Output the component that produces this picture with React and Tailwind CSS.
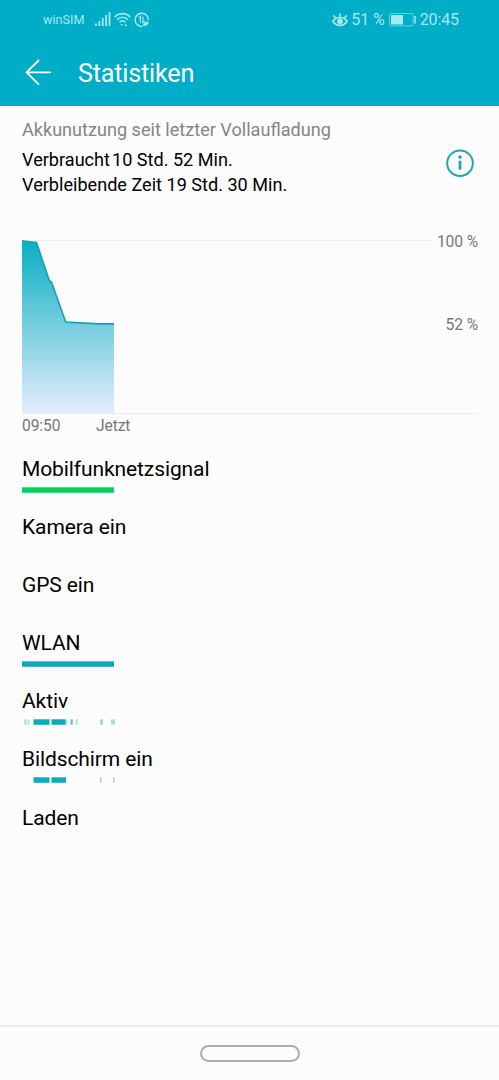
import React from 'react';

const usageRows = [
    { name: 'Mobilfunknetzsignal', color: '#0bcf5c', segments: [[0, 92, 1]] },
    { name: 'Kamera ein', color: '#10a9b9', segments: [] },
    { name: 'GPS ein', color: '#10a9b9', segments: [] },
    { name: 'WLAN', color: '#10a9b9', segments: [[0, 92, 1]] },
    {
        name: 'Aktiv',
        color: '#10a9b9',
        segments: [
            [2.5, 2, 0.4], [5.8, 1.6, 0.35], [11.5, 16, 1], [29.5, 14, 1], [43.5, 1.5, 0.4],
            [48.7, 2, 0.7], [54, 1.5, 0.4], [78, 3, 0.4], [89, 4, 0.35],
        ],
    },
    {
        name: 'Bildschirm ein',
        color: '#10a9b9',
        segments: [[11.5, 16, 1], [29.5, 14.5, 1], [78, 1.5, 0.4], [91, 1.5, 0.4]],
    },
    { name: 'Laden', color: '#10a9b9', segments: [] },
];

const SignalIcon = () => (
    <svg width="16" height="15" viewBox="0 0 16 15" fill="currentColor">
        <rect x="0" y="11.5" width="1.8" height="2.5" />
        <rect x="3.4" y="9" width="1.8" height="5" />
        <rect x="6.8" y="6" width="1.8" height="8" />
        <rect x="10.2" y="3" width="1.8" height="11" />
        <rect x="13.6" y="0" width="1.8" height="14" />
    </svg>
);

const WifiIcon = () => (
    <svg width="17" height="15" viewBox="0 0 18 15" fill="none" stroke="currentColor" strokeWidth="1.7">
        <path d="M.8 5C5.2.1 12.8.1 17.2 5M3.3 7.7c3.1-3.5 8.3-3.5 11.4 0M5.8 10.3c1.8-2 4.6-2 6.4 0" />
        <path d="M6.8 12.3h3L8.3 14.4zM11 14.4l1.5-2.4 1.5 2.4z" fill="currentColor" stroke="none" />
    </svg>
);

const DataIcon = () => (
    <svg width="16" height="16" viewBox="0 0 16 16" fill="none" stroke="currentColor">
        <path d="M14.3 8.2A6.6 6.6 0 1 0 8.5 14.4" strokeWidth="1.5" />
        <path d="M6.4 10.8V4.4L4.7 6.2M8.9 4.4v6.2l1.8-1.8" strokeWidth="1.2" />
        <path d="M9 13.8c-.1-3 2-4.5 5.6-4.3.1 3.4-2.4 5.4-5.6 4.3z" fill="currentColor" stroke="none" />
    </svg>
);

const EyeIcon = () => (
    <svg width="16" height="15" viewBox="0 0 16 15" fill="none" stroke="currentColor" strokeWidth="1.7">
        <path d="M.9 8.3C4.3 3.2 11.7 3.2 15.1 8.3 11.7 13.7 4.3 13.7.9 8.3z" />
        <path d="M8 4.3V.2M3.8 5.3 1.3 2.3M12.2 5.3l2.5-3" strokeWidth="1.5" />
        <circle cx="8" cy="8.3" r="2.9" fill="currentColor" stroke="none" />
    </svg>
);

const BatteryIcon = () => (
    <svg width="28" height="14" viewBox="0 0 28 14">
        <rect x=".5" y=".5" width="23.5" height="12.5" rx="1" fill="none" stroke="currentColor" strokeOpacity=".6" />
        <rect x="2" y="2" width="12" height="9.5" fill="currentColor" />
        <rect x="25.3" y="3" width="1.5" height="7.5" fill="currentColor" />
    </svg>
);

const Header = () => (
    <header className="h-[106px] bg-[#00adc7] border-b border-[#2097ad]">
        <div className="h-10 flex items-center justify-between pl-[43px] pr-10 text-[#a6e8f0]">
            <div className="flex items-center">
                <span className="w-[51.5px] text-[12.6px] whitespace-nowrap">winSIM</span>
                <SignalIcon />
                <span className="ml-[3.5px]"><WifiIcon /></span>
                <span className="ml-[3px]"><DataIcon /></span>
            </div>
            <div className="flex items-center text-[16px] tracking-[-0.1px] whitespace-nowrap">
                <EyeIcon />
                <span className="ml-[3px]">51 %</span>
                <span className="ml-[4px]"><BatteryIcon /></span>
                <span className="ml-[3px]">20:45</span>
            </div>
        </div>
        <div className="h-[66px] flex items-center pl-[25px] text-white">
            <svg className="-mt-px" width="27" height="27" viewBox="0 0 27 27" fill="none" stroke="currentColor" strokeWidth="1.8" strokeLinecap="round" strokeLinejoin="round">
                <path d="M25.2 13.3H1.5M13.5 1.5 1.5 13.3l12 11.8" />
            </svg>
            <h1 className="mt-[2px] ml-[26px] text-[25.2px] leading-none tracking-[-0.2px]">Statistiken</h1>
        </div>
    </header>
);

const Summary = () => (
    <section className="h-[134px] pt-[11px] pl-[22px] pr-[25px]">
        <h2 className="text-[18.1px] leading-[25px] text-[#858585] whitespace-nowrap">Akkunutzung seit letzter Vollaufladung</h2>
        <div className="mt-[6px] flex justify-between">
            <div className="text-[18.1px] leading-[24.5px] whitespace-nowrap">
                <p>Verbraucht<span className="ml-[2px]">10 Std. 52 Min.</span></p>
                <p>Verbleibende Zeit 19 Std. 30 Min.</p>
            </div>
            <svg className="mt-px" width="28" height="28" viewBox="0 0 28 28" fill="none" stroke="#20a6b0">
                <circle cx="14" cy="14.2" r="12.8" strokeWidth="2" />
                <path d="M14 11.7v9" strokeWidth="2.7" />
                <circle cx="14" cy="8.1" r="1.8" fill="#20a6b0" stroke="none" />
            </svg>
        </div>
    </section>
);

const BatteryChart = () => (
    <section className="h-[200px] px-[22px] text-[#777777] text-[15.6px]">
        <div className="flex h-[174px]">
            <svg width="411" height="174" viewBox="0 0 411 174">
                <defs>
                    <linearGradient id="level" x1="0" y1="0" x2="0" y2="1">
                        <stop offset="0" stopColor="#08afc3" />
                        <stop offset=".45" stopColor="#6ccbdc" />
                        <stop offset=".8" stopColor="#b9e0f1" />
                        <stop offset="1" stopColor="#e4edff" />
                    </linearGradient>
                </defs>
                <path d="M0 .5h411M0 173.5h411" stroke="#ececec" />
                <path d="M0 .5 14.5 2.3 27.3 40.5l2.2 1.5L43.7 82l33 1.9H92V173H0z" fill="url(#level)" />
                <path d="M0 1 14.5 2.5 27.3 40.5l2.2 1.5L43.7 82l33 1.9H92" fill="none" stroke="#18a0b0" strokeWidth="1.6" />
            </svg>
            <div className="w-[44px] border-b border-[#ececec]">
                <div className="-mr-px flex flex-col items-end tracking-[-0.1px] whitespace-nowrap">
                    <span className="-mt-[8px] leading-5">100 %</span>
                    <span className="mt-[63px] leading-5">52 %</span>
                </div>
            </div>
        </div>
        <div className="flex leading-[24px] tracking-[-0.1px]">
            <span className="w-[74px]">09:50</span>
            <span>Jetzt</span>
        </div>
    </section>
);

const UsageRow = ({ name, color, segments }) => (
    <li className="h-[58.1px]">
        <div className="h-[31px] leading-[33px] text-[21px] tracking-[-0.1px] whitespace-nowrap">{name}</div>
        <svg className="mt-[2.5px]" width="94" height="6" viewBox="0 0 94 6" fill={color}>
            {segments.map(([x, width, opacity]) => (
                <rect key={x} x={x} y=".3" width={width} height="5.5" opacity={opacity} />
            ))}
        </svg>
    </li>
);

const App = () => {
    return (
        <div className="w-full h-[1080px] flex flex-col overflow-hidden bg-[#fcfcfc] text-black font-['Roboto',sans-serif]">
            <Header />
            <main className="flex-1">
                <Summary />
                <BatteryChart />
                <ul className="mt-[13px] pl-[22px]">
                    {usageRows.map((row) => (
                        <UsageRow key={row.name} {...row} />
                    ))}
                </ul>
            </main>
            <nav className="h-[55px] border-t-2 border-[#ebebeb] flex items-center justify-center">
                <div className="w-[100px] h-[17px] rounded-full border-2 border-[#adadad]" />
            </nav>
        </div>
    );
};

export default App;
